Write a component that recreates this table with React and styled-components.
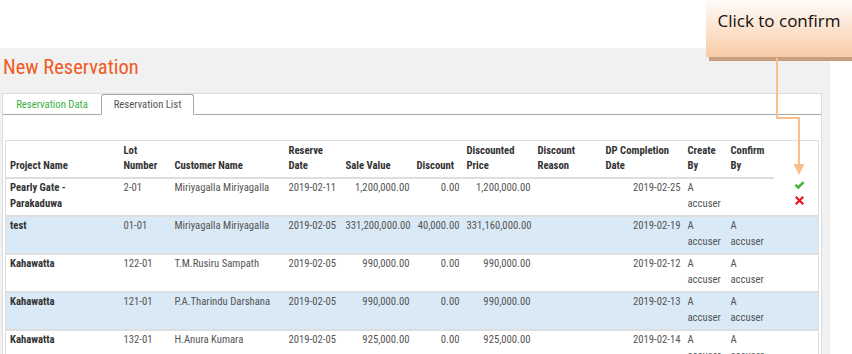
import React from "react";
import styled, { createGlobalStyle } from "styled-components";

const Global = createGlobalStyle`
  html, body { margin: 0; padding: 0; background: #fff; }
  body { font-family: "Roboto Condensed", "Liberation Sans Narrow", "Arial Narrow", Roboto, sans-serif; }
`;

const Page = styled.div`
  position: relative;
  width: 852px;
  height: 354px;
  overflow: hidden;
  padding-top: 48px;
  box-sizing: border-box;
`;

const Panel = styled.div`
  width: 830px;
  height: 306px;
  background: #f1f1f1;
  padding: 4px 8px 0 2px;
  box-sizing: border-box;
`;

const Title = styled.h1`
  margin: 0 0 0 1px;
  font-size: 20.5px;
  line-height: 30px;
  font-weight: 400;
  color: #f05a24;
  height: 41px;
`;

const Card = styled.div`
  background: #fff;
  border: 1px solid #dcdcdc;
  border-bottom: none;
  height: 300px;
`;

const TabStrip = styled.div`
  display: flex;
  height: 20px;
  border-bottom: 1px solid #a8a8a8;
`;

const Tab = styled.div`
  box-sizing: border-box;
  flex: none;
  white-space: nowrap;
  height: ${(p) => (p.$active ? "21px" : "20px")};
  font-size: 10.7px;
  line-height: 19px;
  color: ${(p) => (p.$active ? "#555" : "#3cb043")};
  background: #fff;
  border: ${(p) => (p.$active ? "1px solid #a8a8a8" : "1px solid transparent")};
  border-bottom: ${(p) => (p.$active ? "1px solid #fff" : "none")};
  border-radius: 3px 3px 0 0;
  width: ${(p) => p.$w}px;
  text-align: center;
`;

const Body = styled.div`
  padding: 25px 3px 0 2px;
`;

const Table = styled.table`
  border-collapse: collapse;
  table-layout: fixed;
  width: 813px;
  border: 1px solid #dedede;
  font-size: 10.7px;
`;

const Th = styled.th`
  text-align: left;
  vertical-align: bottom;
  font-weight: 700;
  color: #333;
  line-height: 15px;
  padding: 2px 4px 4px;
  border-bottom: ${(p) => (p.$noline ? "none" : "2px solid #dedede")};
`;

const Row = styled.tr`
  background: ${(p) => (p.$alt ? "#d9e9f5" : "#fff")};
  border-top: 2px solid #dedede;
  &:first-child { border-top: none; }
`;

const Td = styled.td`
  vertical-align: top;
  text-align: ${(p) => (p.$right ? "right" : "left")};
  color: ${(p) => (p.$bold ? "#333" : "#555")};
  font-weight: ${(p) => (p.$bold ? 700 : 400)};
  line-height: 16px;
  height: 32px;
  white-space: ${(p) => (p.$right ? "nowrap" : "normal")};
  padding: 1px ${(p) => (p.$right ? "3px" : "4px")} 3px 4px;
`;

const Actions = styled.div`
  display: flex;
  flex-direction: column;
  align-items: center;
  gap: 6px;
  padding-top: 2px;
  margin-left: 8px;
`;

const Callout = styled.div`
  position: absolute;
  left: 706px;
  top: -4px;
  width: 150px;
  height: 61px;
  background: linear-gradient(#ffffff 0%, #fde7d6 45%, #f8cca6 100%);
  box-shadow: 3px 4px 0 #c79f80;
  display: flex;
  justify-content: center;
  padding: 13px 4px 0 0;
  box-sizing: border-box;
  font-family: "Open Sans", "Liberation Sans", sans-serif;
  font-size: 17px;
  color: #111;
`;

const Connector = styled.svg`
  position: absolute;
  left: 770px;
  top: 58px;
`;

const cols = [114, 51, 114, 57, 71, 50, 71, 68, 82, 43, 47, 45];

const rows = [
  ["Pearly Gate - Parakaduwa", "2-01", "Miriyagalla Miriyagalla", "2019-02-11", "1,200,000.00", "0.00", "1,200,000.00", "", "2019-02-25", "A accuser", "", true],
  ["test", "01-01", "Miriyagalla Miriyagalla", "2019-02-05", "331,200,000.00", "40,000.00", "331,160,000.00", "", "2019-02-19", "A accuser", "A accuser"],
  ["Kahawatta", "122-01", "T.M.Rusiru Sampath", "2019-02-05", "990,000.00", "0.00", "990,000.00", "", "2019-02-12", "A accuser", "A accuser"],
  ["Kahawatta", "121-01", "P.A.Tharindu Darshana", "2019-02-05", "990,000.00", "0.00", "990,000.00", "", "2019-02-13", "A accuser", "A accuser"],
  ["Kahawatta", "132-01", "H.Anura Kumara", "2019-02-05", "925,000.00", "0.00", "925,000.00", "", "2019-02-14", "A accuser", "A accuser"],
];

const headers = [
  ["Project Name"],
  ["Lot", "Number"],
  ["Customer Name"],
  ["Reserve", "Date"],
  ["Sale Value"],
  ["Discount"],
  ["Discounted", "Price"],
  ["Discount", "Reason"],
  ["DP Completion", "Date"],
  ["Create", "By"],
  ["Confirm", "By"],
];

const Check = () => (
  <svg width="11" height="9" viewBox="0 0 11 9">
    <path d="M0.5 4.6 L2.3 2.9 L4.2 4.8 L8.7 0.3 L10.5 2 L4.2 8.3 Z" fill="#3fb536" />
  </svg>
);

const Cross = () => (
  <svg width="9" height="9" viewBox="0 0 9 9">
    <path d="M1.5 0 L4.5 3 L7.5 0 L9 1.5 L6 4.5 L9 7.5 L7.5 9 L4.5 6 L1.5 9 L0 7.5 L3 4.5 L0 1.5 Z" fill="#e8141b" />
  </svg>
);

const right = new Set([4, 5, 6, 8]);

export default function App() {
  return (
    <>
      <Global />
      <Page>
        <Panel>
          <Title>New Reservation</Title>
          <Card>
            <TabStrip>
              <Tab $w={98}>Reservation Data</Tab>
              <Tab $active $w={93}>Reservation List</Tab>
            </TabStrip>
            <Body>
              <Table>
                <colgroup>
                  {cols.map((w, i) => (
                    <col key={i} style={{ width: w }} />
                  ))}
                </colgroup>
                <thead>
                  <tr>
                    {headers.map((h, i) => (
                      <Th key={i}>
                        {h.map((l, j) => (
                          <React.Fragment key={j}>
                            {j > 0 && <br />}
                            {l}
                          </React.Fragment>
                        ))}
                      </Th>
                    ))}
                    <Th $noline />
                  </tr>
                </thead>
                <tbody>
                  {rows.map((r, i) => (
                    <Row key={i} $alt={i % 2 === 1}>
                      {r.slice(0, 11).map((c, j) => (
                        <Td key={j} $bold={j === 0} $right={right.has(j)}>
                          {j >= 9 && c ? (
                            <>
                              A<br />accuser
                            </>
                          ) : (
                            c
                          )}
                        </Td>
                      ))}
                      <Td>
                        {r[11] && (
                          <Actions>
                            <Check />
                            <Cross />
                          </Actions>
                        )}
                      </Td>
                    </Row>
                  ))}
                </tbody>
              </Table>
            </Body>
          </Card>
        </Panel>
        <Callout>Click to confirm</Callout>
        <Connector width="40" height="120" viewBox="0 0 40 120">
          <path d="M7 0 V60 H29 V106" fill="none" stroke="#fbbd8a" strokeWidth="2" />
          <path d="M23.5 106 L34.5 106 L29 117 Z" fill="#fbbd8a" />
        </Connector>
      </Page>
    </>
  );
}
